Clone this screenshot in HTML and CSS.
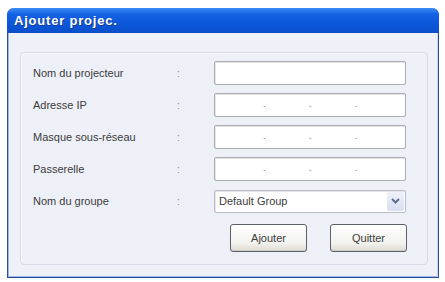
FILE: index.html
```html
<!DOCTYPE html>
<html>
<head>
<meta charset="utf-8">
<link rel="stylesheet" href="styles.css">
</head>
<body>
<div class="window">
  <div class="titlebar">Ajouter projec.</div>
  <div class="client">
    <div class="group">
      <div class="form">
        <div class="label">Nom du projecteur</div><div class="colon">:</div>
        <div class="field"></div>

        <div class="label">Adresse IP</div><div class="colon">:</div>
        <div class="field ip"><span>.</span><span>.</span><span>.</span></div>

        <div class="label">Masque sous-réseau</div><div class="colon">:</div>
        <div class="field ip"><span>.</span><span>.</span><span>.</span></div>

        <div class="label">Passerelle</div><div class="colon">:</div>
        <div class="field ip"><span>.</span><span>.</span><span>.</span></div>

        <div class="label">Nom du groupe</div><div class="colon">:</div>
        <div class="field combo">
          <span class="combo-text">Default Group</span>
          <span class="combo-btn">
            <svg width="9" height="6" viewBox="0 0 9 6"><path d="M1 1 L4.5 4.5 L8 1" fill="none" stroke="#5f6f8f" stroke-width="2"/></svg>
          </span>
        </div>
      </div>
      <div class="buttons">
        <div class="btn">Ajouter</div>
        <div class="btn">Quitter</div>
      </div>
    </div>
  </div>
</div>
</body>
</html>
```

FILE: styles.css
```css
html, body {
  margin: 0;
  padding: 0;
  background: #ffffff;
}
body {
  font-family: "Liberation Sans", "DejaVu Sans", sans-serif;
  font-size: 11px;
  color: #3c3c3c;
}
.window {
  margin: 8px 0 0 7px;
  width: 432px;
  height: 270px;
  box-sizing: border-box;
  border: 1px solid #2c4f9e;
  border-top: none;
  border-radius: 7px 7px 0 0;
  background: #eef1f8;
  display: flex;
  flex-direction: column;
  box-shadow: inset 1px 0 0 #9fb6e3, inset -1px 0 0 #c9d6ef, inset 0 -1px 0 #9fb6e3;
}
.titlebar {
  height: 25px;
  margin: 0 -1px;
  border-radius: 7px 7px 0 0;
  background: linear-gradient(to bottom, #3a8cf5 0%, #1462e4 25%, #0a55d8 70%, #0c4fc8 100%);
  color: #fff;
  font-weight: bold;
  font-size: 13px;
  letter-spacing: 0.8px;
  line-height: 25px;
  padding-left: 7px;
  text-shadow: 1px 1px 0 #1a3c8a;
  flex: none;
}
.client {
  flex: 1;
  padding: 19px 10px 12px 12px;
  display: flex;
}
.group {
  flex: 1;
  border: 1px solid #d6dae6;
  border-radius: 4px;
  background: #eef0f8;
  padding: 8px 20px 0 12px;
  box-shadow: inset 1px 1px 0 #fafbfe;
}
.form {
  display: grid;
  grid-template-columns: 144px 37px 192px;
  grid-auto-rows: 24px;
  row-gap: 8px;
  align-items: center;
}
.label {
  color: #3c3c3c;
}
.colon {
  color: #888;
  font-size: 10px;
}
.field {
  height: 24px;
  box-sizing: border-box;
  border: 1px solid #a9acb3;
  border-radius: 2px;
  background: #ffffff;
  box-shadow: inset 1px 1px 0 #e6e6e6;
}
.ip {
  display: flex;
  padding-left: 48px;
  align-items: center;
  color: #666;
  font-size: 9px;
}
.ip span {
  width: 46px;
  line-height: 10px;
  padding-bottom: 2px;
}
.combo {
  height: 23px;
  display: flex;
  align-items: center;
  justify-content: space-between;
  padding: 0 1px 0 4px;
  border-color: #b8bcc6;
}
.combo-text {
  color: #3c3c3c;
  font-size: 11px;
}
.combo-btn {
  width: 17px;
  height: 19px;
  border-radius: 2px;
  background: linear-gradient(to bottom, #eef2fa, #d6def0);
  display: flex;
  align-items: center;
  justify-content: center;
}
.buttons {
  display: flex;
  justify-content: flex-end;
  gap: 23px;
  margin-top: 11px;
}
.btn {
  width: 77px;
  height: 28px;
  box-sizing: border-box;
  border: 1px solid #5b5f66;
  border-radius: 3px;
  background: linear-gradient(to bottom, #ffffff, #f2f2ee 70%, #dedbd2);
  box-shadow: inset 0 -1px 0 #d0cdc4;
  display: flex;
  align-items: center;
  justify-content: center;
  color: #3c3c3c;
  font-size: 11px;
}
```
